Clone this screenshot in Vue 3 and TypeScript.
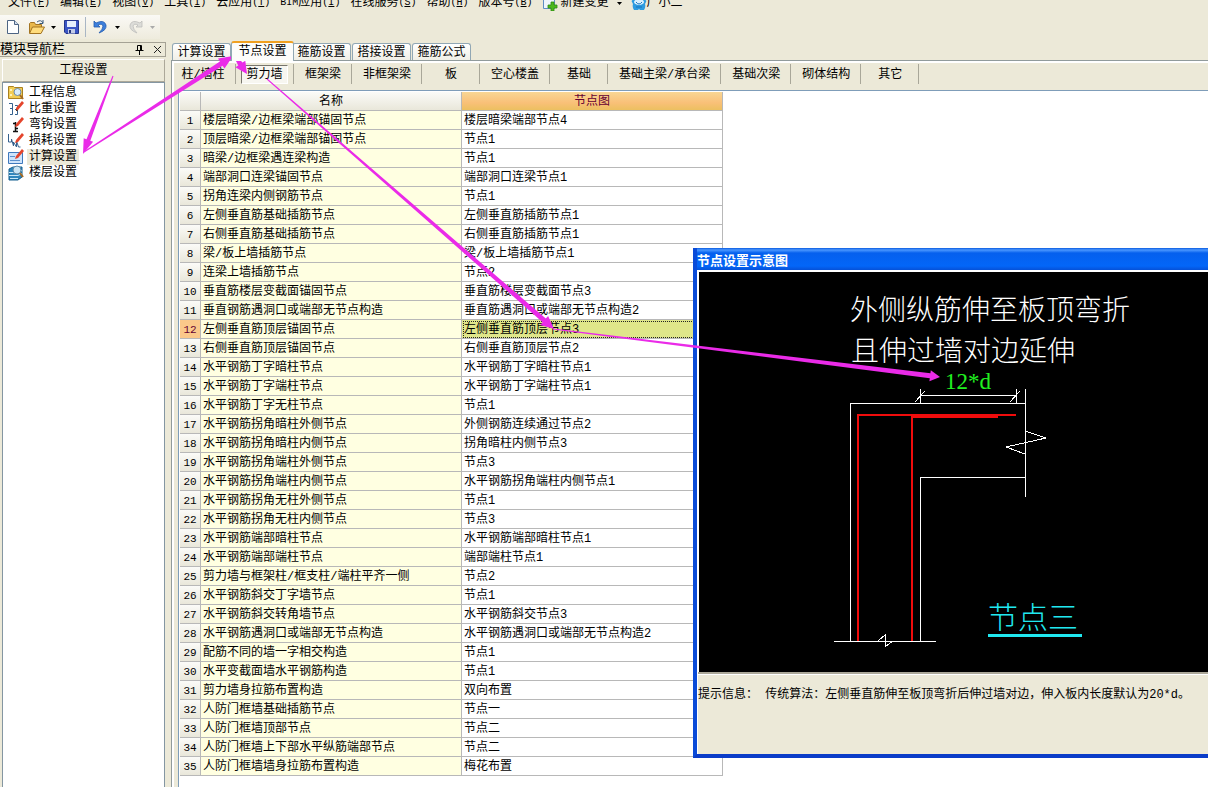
<script setup lang="ts">
import { computed, ref } from 'vue'

interface MenuEntry { latin?: string; label: string; key: string }
interface GridRow { name: string; node: string }
interface Arrow { from: [number, number]; to: [number, number]; tail: number; shaft: number; head: number; length: number }

const menus: MenuEntry[] = [
  { label: '文件', key: 'F' },
  { label: '编辑', key: 'E' },
  { label: '视图', key: 'V' },
  { label: '工具', key: 'I' },
  { label: '云应用', key: 'T' },
  { latin: 'BIM', label: '应用', key: 'I' },
  { label: '在线服务', key: 'S' },
  { label: '帮助', key: 'H' },
  { label: '版本号', key: 'B' },
]

const navItems = ['工程信息', '比重设置', '弯钩设置', '损耗设置', '计算设置', '楼层设置']
const activeNav = ref('计算设置')

const tabs = ['计算设置', '节点设置', '箍筋设置', '搭接设置', '箍筋公式']
const activeTab = ref('节点设置')

const parts = ['柱/墙柱', '剪力墙', '框架梁', '非框架梁', '板', '空心楼盖', '基础', '基础主梁/承台梁', '基础次梁', '砌体结构', '其它']
const activePart = ref('剪力墙')

const rows: GridRow[] = [
  { name: '楼层暗梁/边框梁端部锚固节点', node: '楼层暗梁端部节点4' },
  { name: '顶层暗梁/边框梁端部锚固节点', node: '节点1' },
  { name: '暗梁/边框梁遇连梁构造', node: '节点1' },
  { name: '端部洞口连梁锚固节点', node: '端部洞口连梁节点1' },
  { name: '拐角连梁内侧钢筋节点', node: '节点1' },
  { name: '左侧垂直筋基础插筋节点', node: '左侧垂直筋插筋节点1' },
  { name: '右侧垂直筋基础插筋节点', node: '右侧垂直筋插筋节点1' },
  { name: '梁/板上墙插筋节点', node: '梁/板上墙插筋节点1' },
  { name: '连梁上墙插筋节点', node: '节点2' },
  { name: '垂直筋楼层变截面锚固节点', node: '垂直筋楼层变截面节点3' },
  { name: '垂直钢筋遇洞口或端部无节点构造', node: '垂直筋遇洞口或端部无节点构造2' },
  { name: '左侧垂直筋顶层锚固节点', node: '左侧垂直筋顶层节点3' },
  { name: '右侧垂直筋顶层锚固节点', node: '右侧垂直筋顶层节点2' },
  { name: '水平钢筋丁字暗柱节点', node: '水平钢筋丁字暗柱节点1' },
  { name: '水平钢筋丁字端柱节点', node: '水平钢筋丁字端柱节点1' },
  { name: '水平钢筋丁字无柱节点', node: '节点1' },
  { name: '水平钢筋拐角暗柱外侧节点', node: '外侧钢筋连续通过节点2' },
  { name: '水平钢筋拐角暗柱内侧节点', node: '拐角暗柱内侧节点3' },
  { name: '水平钢筋拐角端柱外侧节点', node: '节点3' },
  { name: '水平钢筋拐角端柱内侧节点', node: '水平钢筋拐角端柱内侧节点1' },
  { name: '水平钢筋拐角无柱外侧节点', node: '节点1' },
  { name: '水平钢筋拐角无柱内侧节点', node: '节点3' },
  { name: '水平钢筋端部暗柱节点', node: '水平钢筋端部暗柱节点1' },
  { name: '水平钢筋端部端柱节点', node: '端部端柱节点1' },
  { name: '剪力墙与框架柱/框支柱/端柱平齐一侧', node: '节点2' },
  { name: '水平钢筋斜交丁字墙节点', node: '节点1' },
  { name: '水平钢筋斜交转角墙节点', node: '水平钢筋斜交节点3' },
  { name: '水平钢筋遇洞口或端部无节点构造', node: '水平钢筋遇洞口或端部无节点构造2' },
  { name: '配筋不同的墙一字相交构造', node: '节点1' },
  { name: '水平变截面墙水平钢筋构造', node: '节点1' },
  { name: '剪力墙身拉筋布置构造', node: '双向布置' },
  { name: '人防门框墙基础插筋节点', node: '节点一' },
  { name: '人防门框墙顶部节点', node: '节点二' },
  { name: '人防门框墙上下部水平纵筋端部节点', node: '节点二' },
  { name: '人防门框墙墙身拉筋布置构造', node: '梅花布置' },
]
const activeRow = ref(11)

const arrows: Arrow[] = [
  { from: [113, 76], to: [83, 154], tail: 1, shaft: 4, head: 10, length: 15 },
  { from: [84, 152], to: [233, 56], tail: 1, shaft: 5, head: 12, length: 14 },
  { from: [235, 56], to: [247, 74], tail: 3, shaft: 5, head: 12, length: 12 },
  { from: [267, 79], to: [554, 329], tail: 1, shaft: 5, head: 12, length: 13 },
  { from: [553, 329], to: [940, 377], tail: 1, shaft: 5, head: 11, length: 10 },
]

// Each arrow is a shaft that widens from tail to head, ending in a triangular tip.
const arrowPoints = computed(() =>
  arrows.map((a) => {
    const [x1, y1] = a.from
    const [x2, y2] = a.to
    const len = Math.hypot(x2 - x1, y2 - y1)
    const ux = (x2 - x1) / len
    const uy = (y2 - y1) / len
    const bx = x2 - ux * a.length
    const by = y2 - uy * a.length
    const off = (x: number, y: number, w: number) => `${(x - uy * w / 2).toFixed(1)},${(y + ux * w / 2).toFixed(1)}`
    return [
      off(x1, y1, a.tail), off(bx, by, a.shaft), off(bx, by, a.head), `${x2},${y2}`,
      off(bx, by, -a.head), off(bx, by, -a.shaft), off(x1, y1, -a.tail),
    ].join(' ')
  }),
)
</script>

<template>
  <div class="app">
    <nav class="menubar" aria-label="菜单">
      <button v-for="m in menus" :key="m.label" type="button" class="menu"><span v-if="m.latin" class="accel">{{ m.latin }}</span>{{ m.label }}<span class="accel">(<u>{{ m.key }}</u>)</span></button>
      <button type="button" class="menu change">
        <svg width="16" height="16" viewBox="0 0 16 16" aria-hidden="true">
          <path d="M1.500 0.500h9l2 2v11h-11z" fill="#eef5fc" stroke="#5f8fc4" />
          <path d="M9 7h3v3h3v3h-3v3H9v-3H6v-3h3z" fill="#4cb81c" stroke="#2d8a12" stroke-width="0.800" />
        </svg>
        <span>新建变更</span>
        <svg class="caret" width="5" height="12" viewBox="0 0 5 12" aria-hidden="true"><path d="M0 5h5L2.500 8z" fill="#000" /></svg>
      </button>
      <button type="button" class="menu user">
        <svg width="16" height="16" viewBox="0 0 16 16" aria-hidden="true">
          <path d="M1 7q-1-2 1-2 1-4 6-4t6 4q2 0 1 2l-1 2q1 3-1 6h-4l-1-1-1 1H3q-2-3-1-6z" fill="#2d9be0" />
          <ellipse cx="8" cy="7" rx="5" ry="3" fill="#d8f0ff" />
          <path d="M5 7q3 4 6 0M5 12h6" fill="none" stroke="#1672bd" />
        </svg>
        <span>广小二</span>
      </button>
    </nav>

    <div class="toolbar" role="toolbar" aria-label="工具栏">
      <button type="button" class="tool" aria-label="新建">
        <svg width="14" height="16" viewBox="0 0 14 16"><path d="M1.500 1.500h7l4 4v9h-11z" fill="#fdfeff" stroke="#4c6484" /><path d="M8.500 1.500v4h4" fill="#cfdcec" stroke="#4c6484" /></svg>
      </button>
      <button type="button" class="tool open" aria-label="打开">
        <svg width="18" height="16" viewBox="0 0 18 16"><path d="M1.500 14V4.500l1-1h4l1 2h6v3" fill="#e9b84c" stroke="#a37422" /><path d="M1.500 14.500l3-6.500h12l-3.500 6.500z" fill="#ffdc7c" stroke="#a37422" /><path d="M9 3q4-3 6 1m0-3v3.500h-3.500" fill="none" stroke="#3c5d80" /></svg>
        <svg class="caret" width="5" height="12" viewBox="0 0 5 12"><path d="M0 5h5L2.500 8z" fill="#000" /></svg>
      </button>
      <button type="button" class="tool save" aria-label="保存">
        <svg width="15" height="16" viewBox="0 0 15 16"><path d="M0.500 1.500h14v13H2l-1.500-1.500z" fill="#3b55c4" stroke="#24358c" /><path d="M3 2h9v6H3z" fill="#e6eefc" /><path d="M4 10h7v4.500H4z" fill="#c4cce8" /><path d="M5 11h2v3H5z" fill="#26357c" /></svg>
      </button>
      <span class="rule"></span>
      <button type="button" class="tool undo" aria-label="撤销">
        <svg width="15" height="16" viewBox="0 0 15 16"><path d="M1 2v6h6L5 6q4-2 5 1 0 3-4 7 8-3 7-8-2-6-10-2z" fill="#3d7fdc" stroke="#245cae" stroke-width="0.800" /></svg>
        <svg class="caret" width="5" height="12" viewBox="0 0 5 12"><path d="M0 5h5L2.500 8z" fill="#000" /></svg>
      </button>
      <button type="button" class="tool redo" aria-label="重做">
        <svg width="15" height="16" viewBox="0 0 15 16"><path d="M14 2v6H8l2-2Q6 4 5 7q0 3 4 7-8-3-7-8 2-6 10-2z" fill="#dcdcd8" stroke="#bebebb" stroke-width="0.800" /></svg>
        <svg class="caret" width="5" height="12" viewBox="0 0 5 12"><path d="M0 5h5L2.500 8z" fill="#aaa" /></svg>
      </button>
    </div>

    <div class="body">
      <aside class="side">
        <header class="side-head">
          <span class="side-title">模块导航栏</span>
          <button type="button" class="mini" aria-label="固定"><svg width="9" height="10" viewBox="0 0 9 10"><path d="M2.500 0.500h4v5h-4zM5.500 0.500v5M0.500 5.500h8M4.500 6v4" fill="none" stroke="#000" /></svg></button>
          <button type="button" class="mini" aria-label="关闭"><svg width="9" height="9" viewBox="0 0 9 9"><path d="M1 1l7 7M8 1L1 8" fill="none" stroke="#222" /></svg></button>
        </header>
        <button type="button" class="group">工程设置</button>
        <ul class="tree">
          <li v-for="(item, i) in navItems" :key="item">
            <button type="button" class="leaf" :class="{ on: item === activeNav }" @click="activeNav = item">
              <svg width="16" height="16" viewBox="0 0 16 16" aria-hidden="true">
                <template v-if="i === 0">
                  <path d="M0.500 1.500h5l1 1h8v11h-14z" fill="#f2cd55" stroke="#a98020" />
                  <path d="M2 4h2v2H2zM2 9h2v2H2z" fill="#fff3b8" />
                  <circle cx="9.500" cy="7" r="3.500" fill="#d8ecfa" stroke="#6d8aa8" />
                  <path d="M12 10l3 4" stroke="#a66a24" stroke-width="2" />
                </template>
                <template v-else-if="i === 1">
                  <path d="M1 2.500h3.500v11H2M4 7.500H2M7 4.500h2.500v9H7M9 8.500H7" fill="none" stroke="#35618e" />
                  <path d="M14 0l2 2-6 7-2 1 0-3z" fill="#e4452c" /><path d="M8 8v2h2z" fill="#553322" />
                </template>
                <template v-else-if="i === 2">
                  <path d="M7.500 5v9M5 14.500h5M5 6.500h3M8 11.500h2" fill="none" stroke="#111" stroke-width="1.500" />
                  <path d="M14 0l2 2-6 7-3 1 1-3z" fill="#e4452c" />
                </template>
                <template v-else-if="i === 3">
                  <path d="M0.500 1v8h3V6l2 7v-4l3 5V8l2 6h2" fill="none" stroke="#35618e" />
                  <path d="M14 0l2 2-6 7-3 1 1-3z" fill="#e4452c" />
                </template>
                <template v-else-if="i === 4">
                  <path d="M0.500 3.500h14v11H0.500z" fill="#cfe4fb" stroke="#3f79bd" />
                  <path d="M2 7.500h5M2 11.500h10" stroke="#5b91cd" />
                  <path d="M14 0l2 2-6 7-3 1 1-3z" fill="#e4452c" />
                </template>
                <template v-else>
                  <path d="M1 4l4-2h9v10l-4 3H1z" fill="#2f86bd" stroke="#17608f" />
                  <path d="M1 7.500h9l4-2M1 10.500h9l4-2M2 13.500h8" fill="none" stroke="#c8e8f8" />
                  <circle cx="9" cy="5" r="4" fill="#c9e4f4" stroke="#5b88a8" /><path d="M12 8l3 4" stroke="#a66a24" stroke-width="2" />
                </template>
              </svg>
              <span>{{ item }}</span>
            </button>
          </li>
        </ul>
      </aside>

      <main class="main">
        <div class="tabs" role="tablist">
          <button v-for="t in tabs" :key="t" type="button" role="tab" class="tab" :class="{ on: t === activeTab }" :aria-selected="t === activeTab" @click="activeTab = t">{{ t }}</button>
        </div>
        <section class="page">
          <div class="parts">
            <button v-for="p in parts" :key="p" type="button" class="part" :class="{ on: p === activePart }" @click="activePart = p"><span>{{ p }}</span></button>
          </div>
          <div class="sheet">
            <table class="grid">
              <colgroup><col class="c-no" /><col class="c-text" /><col class="c-text" /></colgroup>
              <thead>
                <tr><th></th><th scope="col">名称</th><th scope="col" class="hot">节点图</th></tr>
              </thead>
              <tbody>
                <tr v-for="(r, i) in rows" :key="i" :class="{ on: i === activeRow }" @click="activeRow = i">
                  <th scope="row">{{ i + 1 }}</th>
                  <td class="name">{{ r.name }}</td>
                  <td class="node">{{ r.node }}</td>
                </tr>
              </tbody>
            </table>
          </div>
        </section>
      </main>
    </div>

    <section class="dialog" role="dialog" aria-label="节点设置示意图">
      <h2 class="dialog-title">节点设置示意图</h2>
      <div class="dialog-body">
        <svg class="drawing" width="100%" height="400" shape-rendering="crispEdges">
          <g class="cad">
            <path d="M151.500 369V131.500H326M326.500 117V225M221.500 369V205.500H326M135 369.500H237" />
            <path d="M221 123.500H317M221.500 117V131M317.500 117V131M216 130L226 119M311 130L321 119" />
            <path d="M326 159L347 166L307 175L326 182M179 369L186 363V375L194 369" />
          </g>
          <path class="bar" d="M159 369V143H317" />
          <path class="bar" d="M213 369V144" />
          <path class="bar thick" d="M213 144H299" />
          <text class="note" x="151" y="48">外侧纵筋伸至板顶弯折</text>
          <text class="note" x="152" y="89">且伸过墙对边延伸</text>
          <text class="dim" x="246" y="117">12*d</text>
          <text class="caption" x="289" y="356">节点三</text>
          <path class="underline" d="M289 363H383" />
        </svg>
        <p class="hint">提示信息： 传统算法：左侧垂直筋伸至板顶弯折后伸过墙对边，伸入板内长度默认为20*d。</p>
      </div>
    </section>

    <svg class="arrows" width="100%" height="100%" aria-hidden="true">
      <polygon v-for="(p, i) in arrowPoints" :key="i" :points="p" />
    </svg>
  </div>
</template>

<style>
body {
  margin: 0;
}
</style>

<style scoped>
.app {
  position: relative;
  display: flex;
  flex-direction: column;
  min-height: 100vh;
  overflow: hidden;
  box-sizing: border-box;
  background: #ece9d8;
  color: #000;
  font: 12px/16px "Liberation Mono", "Noto Sans CJK SC", monospace;
}
button {
  margin: 0;
  padding: 0;
  border: 0;
  background: none;
  color: inherit;
  font: inherit;
  white-space: nowrap;
}
.menubar {
  display: flex;
  align-items: flex-end;
  height: 11px;
  padding: 0 0 4px 3px;
  overflow: hidden;
}
.menu {
  display: flex;
  align-items: center;
  padding: 0 5px;
  height: 16px;
}
.accel {
  font-size: 10px;
}
.change {
  gap: 3px;
  padding: 0 3px 0 4px;
}
.change .caret {
  margin-left: 5px;
}
.user {
  padding-left: 6px;
}
.toolbar {
  display: flex;
  align-items: center;
  width: 160px;
  height: 24px;
  padding-left: 6px;
  box-sizing: border-box;
  background: linear-gradient(#faf9f5, #eeebdd);
}
.tool {
  display: flex;
  align-items: center;
}
.tool svg {
  display: block;
}
.tool .caret {
  margin-left: 5px;
}
.open {
  margin-left: 8px;
}
.save {
  margin-left: 8px;
}
.rule {
  width: 1px;
  height: 20px;
  margin: 0 7px 0 6px;
  background: #a9b6c4;
}
.undo .caret {
  margin-left: 7px;
}
.redo {
  margin-left: 8px;
}
.redo .caret {
  margin-left: 7px;
}
.body {
  display: flex;
  flex: 1;
  padding-top: 2px;
}
.side {
  display: flex;
  flex-direction: column;
  flex: none;
  width: 166px;
  padding-top: 1px;
}
.side-head {
  display: flex;
  align-items: center;
  height: 15px;
  border: 1px solid #a5a295;
  border-left: 0;
  box-sizing: border-box;
}
.side-title {
  flex: 1;
  font-size: 13px;
}
.mini {
  display: flex;
  justify-content: center;
  width: 16px;
}
.mini + .mini {
  margin-left: 2px;
}
.group {
  height: 23px;
  margin: 2px 1px 0 2px;
  border: 1px solid #fff;
  border-right-color: #aca899;
  border-bottom-color: #aca899;
}
.tree {
  flex: 1;
  margin: 0 1px 0 2px;
  padding: 2px 0 0 5px;
  border: 1px solid #8496a2;
  border-bottom: 0;
  background: #fff;
  list-style: none;
}
.leaf {
  display: flex;
  align-items: center;
  gap: 3px;
  height: 16px;
}
.leaf span {
  padding: 0 2px;
}
.leaf.on span {
  background: #ece9d8;
}
.main {
  display: flex;
  flex: 1;
  flex-direction: column;
  min-width: 0;
  margin-left: 5px;
}
.tabs {
  display: flex;
  align-items: flex-end;
  height: 19px;
  padding-left: 1px;
}
.tab {
  height: 17px;
  width: 59px;
  margin-right: 1px;
  padding-top: 2px;
  border: 1px solid #91a7b4;
  border-bottom: 0;
  border-radius: 3px 3px 0 0;
  background: linear-gradient(#fff, #f0efe6);
  line-height: 14px;
}
.tab.on {
  width: 63px;
  height: 20px;
  margin: 0 -2px -1px -1px;
  padding: 0 0 1px;
  border-top: 2px solid #f0a020;
  background: #fcfcfa;
  z-index: 1;
}
.page {
  display: flex;
  flex: 1;
  flex-direction: column;
  border-top: 1px solid #919b9c;
  border-left: 1px solid #919b9c;
  box-shadow: inset 2px 2px #fff;
}
.parts {
  display: flex;
  height: 20px;
  padding: 3px 0 6px;
}
.part {
  min-width: 58px;
  padding: 2px 10px 0 11px;
  border-right: 1px solid #a9a799;
}
.part:first-child {
  width: 64px;
  padding-left: 9px;
}
.part.on {
  padding: 0 5px;
}
.part.on span {
  display: block;
  height: 19px;
  line-height: 19px;
  border: 1px solid #fff;
  border-top-color: #77756c;
  border-left-color: #77756c;
  background: #f7f6f0;
  box-sizing: border-box;
}
.sheet {
  flex: 1;
  margin-left: 6px;
  padding: 1px 0 0 1px;
  border-top: 1px solid #7f9db9;
  border-left: 1px solid #7f9db9;
  background: #fff;
}
.grid {
  width: 543px;
  table-layout: fixed;
  border-collapse: separate;
  border-spacing: 0;
}
.c-no {
  width: 21px;
}
.c-text {
  width: 261px;
}
.grid th,
.grid td {
  height: 16px;
  padding: 2px 0 0;
  border-right: 1px solid #b8b8b8;
  border-bottom: 1px solid #b8b8b8;
  line-height: 16px;
  white-space: nowrap;
}
.grid th {
  background: linear-gradient(#fbfbf8, #e9e7da);
  font-weight: 400;
  text-align: center;
}
.grid tbody th {
  font-size: 11px;
}
.grid thead .hot {
  background: linear-gradient(#f8d694, #f9c078 60%, #ecc060);
  color: #640032;
}
.grid td {
  padding-left: 2px;
}
.name {
  background: #ffffe1;
}
.grid .on th {
  background: #fbc88a;
  color: #640032;
}
.on .node {
  background: #dfe68a;
  outline: 1px dotted #222;
  outline-offset: -2px;
}
.dialog {
  position: absolute;
  top: 248px;
  left: 693px;
  right: 0;
  border-left: 4px solid #0a4bd8;
  border-bottom: 4px solid #0a3cc8;
  background: #ece9d8;
  overflow: hidden;
}
.dialog-title {
  margin: 0;
  height: 22px;
  background: linear-gradient(#0b5be0, #4a97ff 2px, #0560ee 5px, #0366f8 18px, #0551d8);
  color: #fff;
  font: 700 13px/25px "Liberation Sans", "Noto Sans CJK SC", sans-serif;
}
.dialog-body {
  border-left: 1px solid #fff;
  border-top: 2px solid #fff;
}
.drawing {
  display: block;
  background: #000;
  border-left: 1px solid #fff;
  box-sizing: border-box;
}
.cad {
  fill: none;
  stroke: #fff;
}
.bar {
  fill: none;
  stroke: #f00c0c;
  stroke-width: 2;
}
.thick {
  stroke-width: 4;
}
.note {
  fill: #fff;
  font: 300 28px "Noto Sans CJK SC", sans-serif;
}
.dim {
  fill: #20f020;
  font: 23px "Liberation Serif", serif;
}
.caption {
  fill: #20e8f0;
  font: 300 30px "Noto Sans CJK SC", sans-serif;
}
.underline {
  stroke: #20e8f0;
  stroke-width: 3;
}
.hint {
  margin: 0;
  min-height: 67px;
  padding-top: 13px;
  border-top: 2px solid #aca899;
  box-shadow: inset 0 1px #fff;
  white-space: nowrap;
}
.arrows {
  position: absolute;
  inset: 0;
  pointer-events: none;
  fill: #ea2be8;
}
</style>
